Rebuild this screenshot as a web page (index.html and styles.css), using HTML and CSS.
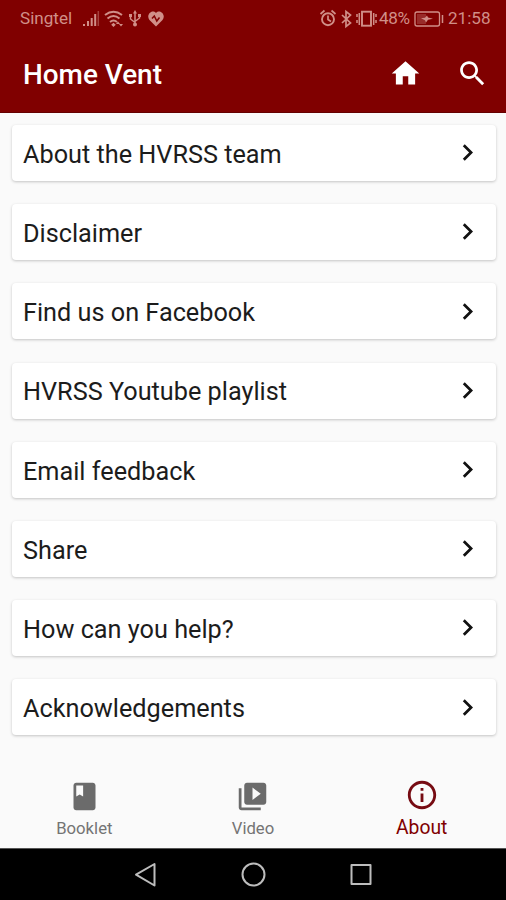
FILE: index.html
```html
<!DOCTYPE html>
<html lang="en">
<head>
<meta charset="utf-8">
<title>Home Vent</title>
<link rel="stylesheet" href="styles.css">
</head>
<body>
<header class="top">
  <div class="status">
    <span class="carrier">Singtel</span>
    <svg class="signals" width="84" height="20" viewBox="82 8 84 20">
      <path d="M84 25v-2M88 25v-5M91.7 25v-8M95.2 25v-12" stroke-width="2"/>
      <path d="M98.3 25v-15" stroke-width="1.500" opacity=".45"/>
      <path d="M105 14q8.500-6.500 17 0M107.500 17.500q6-5 12 0M110 21q3.500-3 7 0" stroke-width="2"/>
      <path d="M113.500 21.700l2.300 2-2.300 2.300-2.300-2.300zM118 20.500l2 2.500h-4zM121 25.500l-2-2.500h4z" class="solid"/>
      <path d="M135 11v12M130.500 14v4l4.500 3.500M139.500 14v3l-4.500 3.500" stroke-width="1.500"/>
      <path d="M135 9l2 3.500h-4zM129 13h3v3h-3zM138 13h3v3h-3z" class="solid"/><circle cx="135" cy="23.500" r="2" class="solid"/>
      <path d="M156 25.500l-6.500-6.500c-4-5 2.500-11.500 6.500-7 4-4.500 10.500 2 6.500 7z" class="solid"/>
      <path d="M152 17.500l2.300-2.500 2.500 5 2.700-3.500" class="cut"/>
    </svg>
    <svg class="alerts" width="58" height="20" viewBox="319 8 58 20">
      <circle cx="328" cy="18.200" r="6" stroke-width="1.900"/><path d="M328 14.500v4l3 2M320.500 13l4-3.500M335.500 13l-4-3.500" stroke-width="1.700"/>
      <path d="M342 14l8.500 8-4.500 3.500v-15l4.500 3.500-8.500 8" stroke-width="1.700"/>
      <rect x="362" y="10.700" width="9" height="14" stroke-width="1.900"/><path d="M359.300 12v12M357 13v3M357 19v3M373.700 12v12M376 13v3M376 19v3" stroke-width="1.500"/>
    </svg>
    <span class="percent">48%</span>
    <svg class="battery" width="31" height="20" viewBox="413 8 31 20">
      <rect x="415" y="11" width="24.500" height="14" rx="2" stroke-width="1.300"/><path d="M442.500 14v8" stroke-width="1.500"/><path d="M417 13h9v10h-9z" class="solid faint"/><path d="M421 17.300l4-.5 2-2.300 1 2 5 1.300-5 1-2 2.700-1-2.200z" class="solid"/>
    </svg>
    <span class="clock">21:58</span>
  </div>
  <div class="appbar">
    <h1>Home Vent</h1>
    <svg class="home" viewBox="0 0 24 24"><path d="M10 20v-6h4v6h5v-8h3L12 3 2 12h3v8z"/></svg>
    <svg class="search" viewBox="0 0 24 24"><path d="M15.500 14h-.79l-.28-.27C15.410 12.590 16 11.110 16 9.500 16 5.910 13.090 3 9.500 3S3 5.910 3 9.500 5.910 16 9.500 16c1.610 0 3.090-.59 4.230-1.570l.27.28v.79l5 4.990L20.490 19l-4.990-5zm-6 0C7.010 14 5 11.990 5 9.500S7.010 5 9.500 5 14 7.010 14 9.500 11.990 14 9.500 14z"/></svg>
  </div>
</header>
<main class="list">
  <a class="card"><span>About the HVRSS team</span><svg viewBox="0 0 24 24"><path d="M10 6 8.590 7.410 13.170 12l-4.580 4.590L10 18l6-6z"/></svg></a>
  <a class="card"><span>Disclaimer</span><svg viewBox="0 0 24 24"><path d="M10 6 8.590 7.410 13.170 12l-4.580 4.590L10 18l6-6z"/></svg></a>
  <a class="card"><span>Find us on Facebook</span><svg viewBox="0 0 24 24"><path d="M10 6 8.590 7.410 13.170 12l-4.580 4.590L10 18l6-6z"/></svg></a>
  <a class="card"><span>HVRSS Youtube playlist</span><svg viewBox="0 0 24 24"><path d="M10 6 8.590 7.410 13.170 12l-4.580 4.590L10 18l6-6z"/></svg></a>
  <a class="card"><span>Email feedback</span><svg viewBox="0 0 24 24"><path d="M10 6 8.590 7.410 13.170 12l-4.580 4.590L10 18l6-6z"/></svg></a>
  <a class="card"><span>Share</span><svg viewBox="0 0 24 24"><path d="M10 6 8.590 7.410 13.170 12l-4.580 4.590L10 18l6-6z"/></svg></a>
  <a class="card"><span>How can you help?</span><svg viewBox="0 0 24 24"><path d="M10 6 8.590 7.410 13.170 12l-4.580 4.590L10 18l6-6z"/></svg></a>
  <a class="card"><span>Acknowledgements</span><svg viewBox="0 0 24 24"><path d="M10 6 8.590 7.410 13.170 12l-4.580 4.590L10 18l6-6z"/></svg></a>
</main>
<nav class="tabs">
  <a class="tab"><svg viewBox="0 0 24 24"><path d="M18 2H6c-1.100 0-2 .9-2 2v16c0 1.100.9 2 2 2h12c1.100 0 2-.9 2-2V4c0-1.100-.9-2-2-2zM6 4h5v8l-2.500-1.500L6 12V4z"/></svg><span>Booklet</span></a>
  <a class="tab"><svg viewBox="0 0 24 24"><path d="M4 6H2v14c0 1.100.9 2 2 2h14v-2H4V6zm16-4H8c-1.100 0-2 .9-2 2v12c0 1.100.9 2 2 2h12c1.100 0 2-.9 2-2V4c0-1.100-.9-2-2-2zm-8 12.500v-9l6 4.500-6 4.500z"/></svg><span>Video</span></a>
  <a class="tab active"><svg viewBox="0 0 24 24"><path d="M11 7h2v2h-2zm0 4h2v6h-2zm1-9C6.480 2 2 6.480 2 12s4.480 10 10 10 10-4.480 10-10S17.520 2 12 2zm0 18c-4.410 0-8-3.590-8-8s3.590-8 8-8 8 3.590 8 8-3.590 8-8 8z"/></svg><span>About</span></a>
</nav>
<footer class="system">
  <svg width="26" height="30" viewBox="0 0 26 30"><path d="M21.500 4v21.500L3 14.700z"/></svg>
  <svg width="26" height="30" viewBox="0 0 26 30"><circle cx="13.500" cy="14.500" r="11"/></svg>
  <svg width="26" height="30" viewBox="0 0 26 30"><path d="M3.500 5h19v19h-19z"/></svg>
</footer>
</body>
</html>
```
FILE: styles.css
```css
* { box-sizing: border-box; }
body {
  margin: 0;
  height: 900px;
  display: flex;
  flex-direction: column;
  overflow: hidden;
  background: #fafafa;
  font-family: Roboto, sans-serif;
}
svg { display: block; flex: none; }
.top {
  height: 113px;
  background: #800000;
  border-bottom: 1px solid #650000;
}
.status {
  height: 37px;
  display: flex;
  align-items: center;
  color: #d08f88;
  font-size: 17.100px;
  line-height: 37px;
  white-space: nowrap;
}
.status svg { fill: none; stroke: #d08f88; }
.status .solid { fill: #d08f88; stroke: none; }
.status .faint { opacity: .3; }
.status .cut { stroke: #800000; stroke-width: 1.500px; }
.carrier { width: 62px; margin-left: 20px; }
.alerts { margin-left: 153px; }
.percent { width: 34px; margin-left: 2px; letter-spacing: -.4px; }
.battery { margin-right: 4px; }
.appbar {
  height: 75px;
  display: flex;
  align-items: center;
  padding-left: 23px;
  color: #fff;
}
h1 {
  width: 366px;
  margin: 0;
  font-size: 27.900px;
  font-weight: 500;
  line-height: 75px;
}
.appbar svg { fill: #fff; width: 33px; height: 33px; margin-bottom: 2px; }
.search { margin-left: 34px; }
.list {
  height: 647px;
  display: flex;
  flex-direction: column;
  gap: 23.200px;
  padding: 12px 10.500px 0 12px;
}
.card {
  height: 56px;
  flex: none;
  display: flex;
  align-items: center;
  justify-content: space-between;
  padding: 0 12px 0 11px;
  background: #fff;
  border-radius: 4px;
  box-shadow: 0 1px 3px rgba(0,0,0,.22);
  color: #1c1c1c;
  font-size: 25.250px;
  line-height: 56px;
  white-space: nowrap;
}
.card span { padding-top: 3.500px; }
.card svg { width: 33px; height: 33px; fill: #111; margin-bottom: .6px; }
.tabs {
  height: 88px;
  display: grid;
  grid-template-columns: repeat(3, 1fr);
}
.tab {
  display: flex;
  flex-direction: column;
  align-items: center;
  padding-top: 20px;
  color: #747474;
  font-size: 16.700px;
  line-height: 20px;
}
.tab svg { width: 33px; height: 33px; fill: #6b6b6b; margin-bottom: 6px; }
.tab.active { color: #800000; font-size: 19.300px; padding-top: 18px; }
.tab.active svg { width: 34px; height: 34px; fill: #760b12; }
.system {
  height: 52px;
  display: flex;
  align-items: center;
  justify-content: center;
  gap: 81.500px;
  background: #000;
  border-top: 1px solid #555;
}
.system svg { fill: none; stroke: #bdbdbd; stroke-width: 2px; stroke-linejoin: round; }
```
